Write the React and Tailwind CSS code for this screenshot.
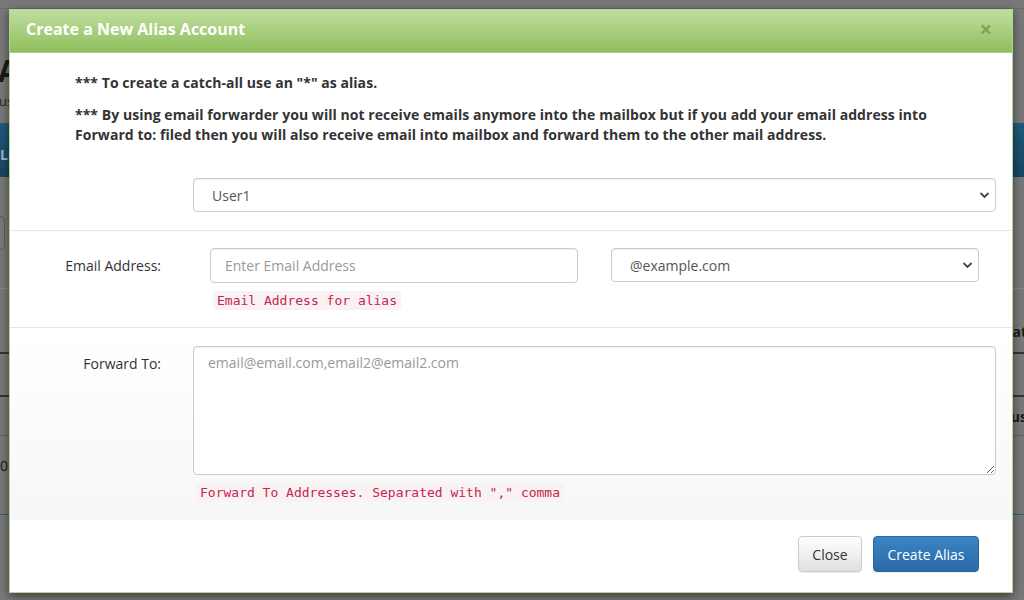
import { useState } from 'react';

const font = { fontFamily: '"Open Sans", "Noto Sans", sans-serif' };

const Chevron = () => (
  <svg width="11" height="8" viewBox="0 0 11 8" className="pointer-events-none absolute top-1/2 -translate-y-1/2 right-[6px]">
    <path d="M1.5 2 L5.5 6 L9.5 2" fill="none" stroke="#444" strokeWidth="1.8" />
  </svg>
);

const SelectBox = ({ value, className }) => (
  <div className={'relative ' + className}>
    <div className="h-[34px] rounded-[4px] border border-[#ccc] bg-white pl-[18px] flex items-center text-[14px] text-[#555] shadow-[inset_0_1px_1px_rgba(0,0,0,0.075)]">
      {value}
    </div>
    <Chevron />
  </div>
);

const HelpCode = ({ text, className }) => (
  <code className={'inline-block px-[4px] py-[1px] rounded-[4px] bg-[#f9f2f4] text-[#c7254e] text-[13px] leading-[17px] ' + className} style={{ fontFamily: '"DejaVu Sans Mono", "Liberation Mono", monospace' }}>
    {text}
  </code>
);

// the page behind the overlay, only its edges show
const Background = () => (
  <div className="min-h-[600px] bg-[#787878] overflow-hidden text-[#1a1a1a]" style={font}>
    <div className="h-[9px] border-b border-[#6a6a6a]" />
    <div className="h-[50px]" />
    <div className="text-[30px] font-bold leading-[24px] -ml-[2px]">A</div>
    <div className="text-[13px] leading-[16px] mt-[10px] -ml-[1px] text-[#222]">us</div>
    <div className="mt-[14px] h-[54px] bg-gradient-to-b from-[#215a7c] to-[#174562] flex items-end pb-[12px] text-[#9fb6c4] text-[14px] font-bold">Li</div>
    <div className="h-[111px] flex items-center">
      <div className="w-[6px] h-[34px] border border-[#5e5e5e] rounded-r-[4px] -ml-[1px]" />
    </div>
    <div className="border-t border-[#888] h-[64px] flex justify-end items-end pb-[10px]">
      <span className="text-[14px] font-bold -mr-[3px]">at</span>
    </div>
    <div className="border-t-2 border-[#333] h-[43px]" />
    <div className="border-t-2 border-[#333] h-[40px] flex justify-end items-center">
      <span className="text-[14px] font-bold -mr-[3px]">us</span>
    </div>
    <div className="border-t border-[#5e5e5e] h-[79px] flex items-center pb-[20px]">
      <span className="text-[14px]">0</span>
    </div>
    <div className="border-t border-[#2c5e7e]" />
  </div>
);

export default function App() {
  const [email, setEmail] = useState('');
  const [forward, setForward] = useState('');

  return (
    <div className="relative w-[1024px] h-[600px] overflow-hidden">
      <Background />

      <div className="absolute inset-0 pt-[9px] pl-[9px]" style={font}>
        <div className="w-[1004px] bg-white border border-[#b4d68e] shadow-[0_3px_9px_rgba(0,0,0,0.5)]">
          <div className="h-[43px] flex items-center justify-between pl-[16px] pr-[20px] pb-[4px] bg-gradient-to-b from-[#c0de9f] to-[#8fbe5b] border-b border-[#a8cf80]">
            <h4 className="text-white font-bold text-[16px]">Create a New Alias Account</h4>
            <button className="text-[22px] leading-none font-bold text-[#6f9a4c] opacity-80 -mt-[2px]">×</button>
          </div>

          <div className="pt-[20px] pb-[18px] border-b border-[#e5e5e5]">
            <div className="pl-[65px] w-[950px] text-[14px] leading-[20px] font-bold text-[#333] tracking-[0.05px]">
              <p className="mb-[12px]">*** To create a catch-all use an "*" as alias.</p>
              <p>*** By using email forwarder you will not receive emails anymore into the mailbox but if you add your email address into Forward to: filed then you will also receive email into mailbox and forward them to the other mail address.</p>
            </div>
            <SelectBox value="User1" className="mt-[33px] ml-[183px] w-[803px]" />
          </div>

          <div className="pt-[17px] pb-[16px] border-b border-[#e5e5e5]">
            <div className="flex items-start">
              <label className="w-[151px] h-[35px] flex items-center justify-end text-[14px] text-[#333]">Email Address:</label>
              <div className="ml-[49px] w-[368px]">
                <input
                  value={email}
                  onChange={e => setEmail(e.target.value)}
                  placeholder="Enter Email Address"
                  className="w-full h-[35px] rounded-[4px] border border-[#ccc] px-[14px] text-[14px] text-[#555] placeholder:text-[#999] outline-none shadow-[inset_0_1px_1px_rgba(0,0,0,0.075)]"
                />
                <HelpCode text="Email Address for alias" className="mt-[8px] ml-[3px]" />
              </div>
              <SelectBox value="@example.com" className="ml-[33px] w-[368px]" />
            </div>
          </div>

          <div className="pt-[18px] pb-[17px] bg-gradient-to-b from-white to-[#f7f7f7]">
            <div className="flex items-start">
              <label className="w-[151px] h-[35px] flex items-center justify-end text-[14px] text-[#333]">Forward To:</label>
              <div className="ml-[32px] w-[803px]">
                <textarea
                  value={forward}
                  onChange={e => setForward(e.target.value)}
                  placeholder="email@email.com,email2@email2.com"
                  className="block w-full h-[129px] rounded-[4px] border border-[#ccc] bg-white px-[14px] py-[6px] text-[14px] leading-[20px] text-[#555] placeholder:text-[#999] outline-none shadow-[inset_0_1px_1px_rgba(0,0,0,0.075)]"
                />
                <HelpCode text={'Forward To Addresses. Separated with "," comma'} className="mt-[8px] ml-[3px]" />
              </div>
            </div>
          </div>

          <div className="h-[72px] flex justify-end items-start pt-[16px] pr-[33px] gap-[11px]">
            <button className="h-[36px] w-[64px] rounded-[4px] border border-[#ccc] bg-gradient-to-b from-white to-[#e0e0e0] text-[14px] text-[#333] shadow-[0_1px_1px_rgba(0,0,0,0.08)]">Close</button>
            <button className="h-[36px] w-[106px] rounded-[4px] border border-[#2b669a] bg-gradient-to-b from-[#3a85c6] to-[#2a69a5] text-[14px] text-white shadow-[0_1px_1px_rgba(0,0,0,0.08)]">Create Alias</button>
          </div>
        </div>
      </div>
    </div>
  );
}
